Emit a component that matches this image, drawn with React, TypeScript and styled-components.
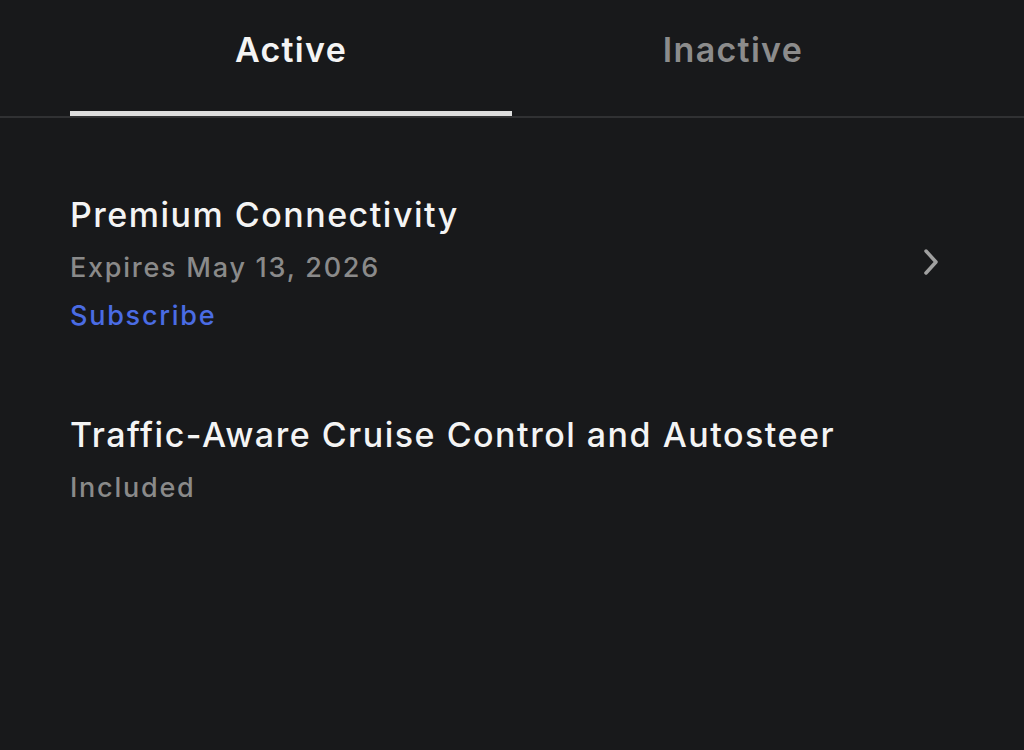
import React from "react";
import styled, { createGlobalStyle } from "styled-components";

const Global = createGlobalStyle`
  html, body { margin: 0; padding: 0; background: #18191b; }
  body { font-family: Inter, "Noto Sans", sans-serif; -webkit-font-smoothing: antialiased; }
`;

const Page = styled.div`
  width: 1024px;
  height: 750px;
  background: #18191b;
  overflow: hidden;
`;

const TabBar = styled.div`
  display: flex;
  padding: 0 70px;
  border-bottom: 2px solid #303133;
`;

const Tab = styled.div<{ $active?: boolean }>`
  flex: 1;
  height: 116px;
  box-sizing: border-box;
  display: flex;
  justify-content: center;
  align-items: flex-start;
  padding-top: 30px;
  font-size: 34px;
  line-height: 40px;
  font-weight: 600;
  letter-spacing: 1.3px;
  color: ${(p) => (p.$active ? "#f4f4f4" : "#8c8c8c")};
  border-bottom: 5px solid ${(p) => (p.$active ? "#dedede" : "transparent")};
`;

const List = styled.div`
  display: flex;
  flex-direction: column;
  padding: 76px 70px 0 70px;
  gap: 74px;
`;

const Item = styled.div`
  display: flex;
  align-items: center;
  justify-content: space-between;
`;

const Info = styled.div`
  display: flex;
  flex-direction: column;
`;

const Title = styled.div`
  font-size: 34px;
  font-weight: 550;
  color: #f4f4f4;
  line-height: 42px;
  letter-spacing: 1.5px;
  margin-bottom: 8px;
`;

const Sub = styled.div<{ $accent?: boolean }>`
  font-size: 27px;
  font-weight: 500;
  line-height: 48px;
  color: ${(p) => (p.$accent ? "#4a6ce4" : "#8a8a8a")};
  letter-spacing: 1.75px;
`;

const Chevron = styled.svg`
  width: 22px;
  height: 30px;
  margin-right: 12px;
  margin-bottom: 11px;
`;

export default function App() {
  return (
    <Page>
      <Global />
      <TabBar>
        <Tab $active>Active</Tab>
        <Tab>Inactive</Tab>
      </TabBar>
      <List>
        <Item>
          <Info>
            <Title>Premium Connectivity</Title>
            <Sub>Expires May 13, 2026</Sub>
            <Sub $accent>Subscribe</Sub>
          </Info>
          <Chevron viewBox="0 0 22 30">
            <path d="M6 4 L16 15 L6 26" fill="none" stroke="#a0a0a0" strokeWidth="3.5" strokeLinecap="round" strokeLinejoin="round" />
          </Chevron>
        </Item>
        <Item>
          <Info>
            <Title>Traffic-Aware Cruise Control and Autosteer</Title>
            <Sub>Included</Sub>
          </Info>
        </Item>
      </List>
    </Page>
  );
}
